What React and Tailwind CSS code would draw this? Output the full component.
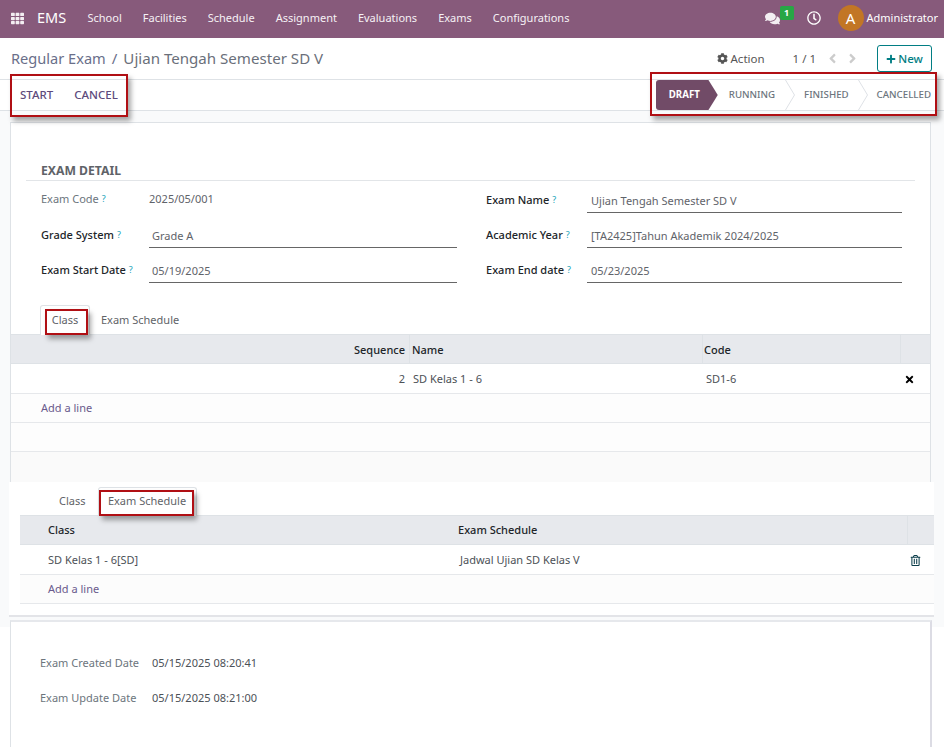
import { FaTh, FaComments, FaRegClock, FaCog, FaPlus, FaAngleLeft, FaAngleRight, FaTimes, FaRegTrashAlt } from "react-icons/fa";

const navItems = ["School", "Facilities", "Schedule", "Assignment", "Evaluations", "Exams", "Configurations"];

// red annotation drawn on top of the screenshot
function Mark({ className }) {
  return <div className={`absolute border-2 border-[#b00f14] shadow-[3px_4px_5px_rgba(0,0,0,0.35)] pointer-events-none ${className}`} />;
}

function Help() {
  return <sup className="ml-[3px] text-[9px] font-normal text-[#17a2b8] relative -top-[1px]">?</sup>;
}

function Field({ label, value, bold = true, labelWidth, width, pad = "pl-[3px]" }) {
  return (
    <div className="flex h-[35px] items-start">
      <div className={`${labelWidth} shrink-0 leading-[20px] ${bold ? "pt-[3px] font-medium text-[#212529]" : "pt-[2px] text-[#6c757d]"}`}>
        {label}
        <Help />
      </div>
      <div className={`${width} h-[26px] ${bold ? `border-b border-[#666] pt-[4px] ${pad}` : "pt-[2px]"} text-[#5f636a] leading-[20px]`}>
        {value}
      </div>
    </div>
  );
}

function Separator() {
  return (
    <svg className="w-[10px] h-[30px] shrink-0" viewBox="0 0 10 30" fill="none">
      <path d="M0.5 0 L9.5 15 L0.5 30" stroke="#dee2e6" />
    </svg>
  );
}

export default function App() {
  return (
    <div className="w-[944px] h-[747px] overflow-hidden bg-white text-[11px] font-['Noto_Sans',sans-serif] text-[#4c5157] relative">
      <nav className="h-[38px] bg-[#875a7b] flex items-center text-white pb-[2px]">
        <FaTh className="ml-[11px] text-[13px] text-[#f3eef2]" />
        <span className="ml-[13px] text-[14.5px] w-[39px]">EMS</span>
        <div className="flex gap-[21px] ml-[11.5px]">
          {navItems.map((item) => (
            <span key={item} className="text-[#f6f1f5]">{item}</span>
          ))}
        </div>
        <div className="ml-auto flex items-center pr-[6px]">
          <div className="relative mr-[27px]">
            <FaComments className="text-[15px] text-[#f3eef2]" />
            <span className="absolute -top-[5px] left-[15px] h-[14px] w-[14px] rounded-[2px] bg-[#28a745] text-[9px] font-bold leading-[14px] text-center">1</span>
          </div>
          <FaRegClock className="text-[14px] mr-[17px]" />
          <div className="h-[26px] w-[26px] rounded-full bg-[#c27625] text-[15px] leading-[26px] text-center mr-[3px]">A</div>
          <span>Administrator</span>
        </div>
      </nav>

      <div className="h-[42px] bg-white border-b border-[#dee2e6] flex items-center pl-[11px] pr-[12px]">
        <span className="text-[14.6px] text-[#6a6f8a]">Regular Exam</span>
        <span className="text-[15px] text-[#6a6f8a] mx-[6px]">/</span>
        <span className="text-[15.1px] text-[#6a6f7a]">Ujian Tengah Semester SD V</span>
        <div className="ml-auto flex items-center text-[11.5px]">
          <FaCog className="text-[11px] text-[#555]" />
          <span className="ml-[3px] text-[#555]">Action</span>
          <span className="ml-[28px] text-[#555]">1 / 1</span>
          <FaAngleLeft className="ml-[9px] text-[15px] text-[#ccc]" />
          <FaAngleRight className="ml-[5px] text-[15px] text-[#ccc]" />
          <button className="ml-[17px] h-[27px] w-[55px] rounded-[3px] border border-[#017e84] text-[#017e84] font-medium flex items-center justify-center gap-[2px]">
            <FaPlus className="text-[10px]" />
            New
          </button>
        </div>
      </div>

      <div className="relative h-[31px] bg-white border-b border-[#dee2e6] flex items-center justify-between">
        <div className="flex gap-[21px] pl-[20px] text-[11.5px] font-medium text-[#5d4a7c]">
          <span>START</span>
          <span>CANCEL</span>
        </div>
        <div className="flex items-center h-full text-[9.7px] font-medium text-[#6c757d]">
          <div className="h-[30px] w-[62px] bg-[#714b67] text-white font-bold flex items-center pl-[13px] [clip-path:polygon(0_0,85%_0,100%_50%,85%_100%,0_100%)] rounded-l-[3px]">DRAFT</div>
          <span className="ml-[11px] mr-[10px]">RUNNING</span>
          <Separator />
          <span className="ml-[9px] mr-[9px]">FINISHED</span>
          <Separator />
          <span className="ml-[9px] mr-[13px]">CANCELLED</span>
        </div>
        <Mark className="left-[10px] -top-[6px] w-[118px] h-[43px]" />
        <Mark className="left-[650px] -top-[8px] w-[287px] h-[44px]" />
      </div>

      <div className="bg-[#f9fafb] h-[516px] pt-[11px]">
        <div className="ml-[10px] w-[921px] h-[360px] bg-white border border-[#dee2e6] border-b-0">
          <div className="mx-[15px] mt-[40px] h-[18px] border-b border-[#e2e5e8] pl-[15px] text-[12.2px] font-bold text-[#5f6368] leading-[16px]">EXAM DETAIL</div>
          <div className="flex pl-[30px] pt-[6px]">
            <div className="w-[445px]">
              <Field label="Exam Code" value="2025/05/001" bold={false} labelWidth="w-[108px]" width="w-[308px]" />
              <Field label="Grade System" value="Grade A" labelWidth="w-[108px]" width="w-[308px]" />
              <Field label="Exam Start Date" value="05/19/2025" labelWidth="w-[108px]" width="w-[308px]" />
            </div>
            <div>
              <Field label="Exam Name" value="Ujian Tengah Semester SD V" labelWidth="w-[101px]" width="w-[315px]" pad="pl-[4px]" />
              <Field label="Academic Year" value="[TA2425]Tahun Akademik 2024/2025" labelWidth="w-[101px]" width="w-[315px]" pad="pl-[4px]" />
              <Field label="Exam End date" value="05/23/2025" labelWidth="w-[101px]" width="w-[315px]" pad="pl-[4px]" />
            </div>
          </div>

          <div className="relative flex h-[30px] mt-[13px] pl-[29px] items-stretch border-b border-[#dee2e6]">
            <div className="h-[30px] w-[50px] bg-white border border-b-0 border-[#dee2e6] rounded-t-[3px] text-center pt-[6px] text-[#5f6368]">Class</div>
            <div className="pl-[11px] pt-[7px] text-[#5f6368]">Exam Schedule</div>
            <Mark className="left-[34px] top-[4px] w-[43px] h-[26px]" />
          </div>
          <div className="grid grid-cols-[398px_293px_198px_1fr] h-[29px] bg-[#e7e9ed] border-b border-[#dee2e6] font-medium text-[#212529]">
            <div className="text-right pr-[4px] leading-[29px]">Sequence</div>
            <div className="border-l border-[#dee2e6] pl-[2px] leading-[29px]">Name</div>
            <div className="border-l border-[#dee2e6] pl-[1px] leading-[29px]">Code</div>
            <div className="border-l border-[#dee2e6]" />
          </div>
          <div className="grid grid-cols-[398px_293px_198px_1fr] h-[30px] border-b border-[#e6e8eb] items-center pt-[1px]">
            <div className="text-right pr-[4px]">2</div>
            <div className="pl-[4px]">SD Kelas 1 - 6</div>
            <div className="pl-[4px]">SD1-6</div>
            <FaTimes className="ml-[4px] text-[11px] text-black" />
          </div>
          <div className="h-[29px] bg-[#fdfdfd] border-b border-[#e6e8eb] pl-[30px] leading-[28px] text-[#6a5a8c]">Add a line</div>
          <div className="h-[29px] bg-[#fdfdfd] border-b border-[#e6e8eb]" />
          <div className="h-[30px] bg-[#fafafa]" />
        </div>

        <div className="ml-[9px] w-[925px] h-[135px] bg-white border-b-2 border-[#e3e4e8] pl-[11px]">
          <div className="relative flex h-[34px] pt-[5px] border-b border-[#dee2e6]">
            <div className="pl-[39px] pr-[12px] pt-[6px] text-[#5f6368]">Class</div>
            <div className="h-[29px] w-[99px] bg-white border border-b-0 border-[#dee2e6] rounded-t-[3px] text-center pt-[5px] text-[#5f6368]">Exam Schedule</div>
            <Mark className="left-[79px] top-[8px] w-[95px] h-[26px]" />
          </div>
          <div className="grid grid-cols-[410px_477px_1fr] h-[29px] bg-[#e7e9ed] border-b border-[#dee2e6] font-medium text-[#212529]">
            <div className="pl-[28px] leading-[28px]">Class</div>
            <div className="pl-[28px] leading-[28px]">Exam Schedule</div>
            <div className="border-l border-[#dee2e6]" />
          </div>
          <div className="grid grid-cols-[410px_477px_1fr] h-[30px] border-b border-[#e6e8eb] items-center pt-[1px]">
            <div className="pl-[28px]">SD Kelas 1 - 6[SD]</div>
            <div className="pl-[30px]">Jadwal Ujian SD Kelas V</div>
            <FaRegTrashAlt className="ml-[3px] text-[11px] text-[#0b3d4a]" />
          </div>
          <div className="h-[29px] bg-[#fcfcfc] border-b border-[#e6e8eb] pl-[28px] leading-[28px] text-[#6a5a8c]">Add a line</div>
        </div>

        <div className="mt-[3px] ml-[10px] w-[922px] h-[10px] bg-white border-t-2 border-r-2 border-l border-t-[#e6e8ec] border-r-[#dcdce4] border-l-[#dee2e6]" />
      </div>

      <div className="ml-[10px] w-[922px] h-[120px] bg-white border-r-2 border-l border-r-[#dcdce4] border-l-[#dee2e6] pl-[29px] pt-[28px]">
        <div className="flex h-[35px]">
          <span className="w-[112px] text-[#6c757d]">Exam Created Date</span>
          <span>05/15/2025 08:20:41</span>
        </div>
        <div className="flex">
          <span className="w-[112px] text-[#6c757d]">Exam Update Date</span>
          <span>05/15/2025 08:21:00</span>
        </div>
      </div>
    </div>
  );
}
